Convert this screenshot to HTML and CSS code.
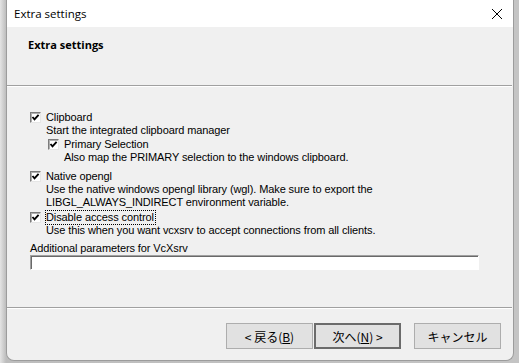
FILE: index.html
```html
<!DOCTYPE html>
<html lang="ja">
<head>
  <meta charset="UTF-8">
  <title>Extra settings</title>
  <link rel="stylesheet" href="styles.css">
</head>
<body>
  <div class="window">
    <div class="titlebar">
      <span class="title">Extra settings</span>
      <svg class="close" width="12" height="12" viewBox="0 0 12 12">
        <path d="M1 1 L11 11 M11 1 L1 11" stroke="#000" stroke-width="1"/>
      </svg>
    </div>

    <div class="header">
      <h2>Extra settings</h2>
    </div>

    <div class="content">
      <!-- Clipboard -->
      <div class="opt">
        <span class="check"><svg viewBox="0 0 9 9"><path d="M1.5 4 L3.5 6.3 L7.6 1.8" /></svg></span>
        <span>Clipboard</span>
      </div>
      <div class="desc">Start the integrated clipboard manager</div>
      <div class="sub">
        <div class="opt">
          <span class="check"><svg viewBox="0 0 9 9"><path d="M1.5 4 L3.5 6.3 L7.6 1.8" /></svg></span>
          <span>Primary Selection</span>
        </div>
        <div class="desc">Also map the PRIMARY selection to the windows clipboard.</div>
      </div>

      <!-- OpenGL -->
      <div class="opt opt-gap">
        <span class="check"><svg viewBox="0 0 9 9"><path d="M1.5 4 L3.5 6.3 L7.6 1.8" /></svg></span>
        <span>Native opengl</span>
      </div>
      <div class="desc">Use the native windows opengl library (wgl). Make sure to export the<br>LIBGL_ALWAYS_INDIRECT environment variable.</div>

      <!-- Access control -->
      <div class="opt opt-gap2">
        <span class="check"><svg viewBox="0 0 9 9"><path d="M1.5 4 L3.5 6.3 L7.6 1.8" /></svg></span>
        <span class="focus">Disable access control</span>
      </div>
      <div class="desc">Use this when you want vcxsrv to accept connections from all clients.</div>

      <div class="label">Additional parameters for VcXsrv</div>
      <input class="params" type="text">
    </div>

    <div class="footer">
      <button class="btn">&lt; 戻る(<u>B</u>)</button>
      <button class="btn default">次へ(<u>N</u>) &gt;</button>
      <button class="btn cancel">キャンセル</button>
    </div>
  </div>
</body>
</html>
```

FILE: styles.css
```css
body {
  margin: 0;
  background: linear-gradient(to right, #e4e4e4, #bdbdbd 6px, #c4c4c4);
  height: 363px;
  overflow: hidden;
}

.window {
  margin-left: 6px;
  width: 508px;
  height: 361px;
  background: #f0f0f0;
  border-left: 1px solid #9c9c9c;
  border-right: 1px solid #9c9c9c;
  border-bottom: 1px solid #9c9c9c;
  border-radius: 0 0 8px 8px;
  box-sizing: border-box;
  display: flex;
  flex-direction: column;
  color: #000;
}

.titlebar {
  height: 27px;
  background: #fff;
  display: flex;
  align-items: center;
  justify-content: space-between;
  padding: 0 10px 0 7px;
  font-family: "Open Sans", "Noto Sans", sans-serif;
  font-size: 11.5px;
}

.close {
  margin-top: 1px;
}

.header {
  height: 59px;
  padding: 0 0 0 21px;
  border-bottom: 1px solid #a0a0a0;
  box-shadow: 0 1px 0 #fff;
  margin-right: 1px;
  box-sizing: border-box;
}

.header h2 {
  margin: 0;
  padding-top: 10px;
  font-family: "Open Sans", "Noto Sans", sans-serif;
  font-size: 11px;
  font-weight: 700;
}

.content {
  padding: 25px 0 0 23px;
  font-family: "Liberation Sans", "Noto Sans CJK JP", sans-serif;
  font-size: 11px;
  letter-spacing: -0.1px;
  line-height: 13px;
}

.opt {
  display: flex;
  align-items: center;
  height: 13px;
}

.opt-gap {
  margin-top: 6px;
}

.opt-gap2 {
  margin-top: 2px;
}

.check {
  width: 9px;
  height: 9px;
  background: #fff;
  border: 1px solid;
  border-color: #7c7c7c #e6e6e6 #e6e6e6 #7c7c7c;
  box-shadow: inset 1px 1px 0 #b0b0b0;
  margin-right: 5px;
  display: flex;
}

.check svg {
  width: 9px;
  height: 9px;
}

.check path {
  fill: none;
  stroke: #000;
  stroke-width: 1.9;
}

.desc {
  padding-left: 16px;
}

.sub {
  margin-top: 1px;
  padding-left: 18px;
}

.focus {
  outline: 1px dotted #000;
  outline-offset: 0;
  padding-right: 1px;
}

.label {
  margin-top: 5px;
}

.params {
  display: block;
  margin: 0;
  width: 449px;
  height: 15px;
  box-sizing: border-box;
  background: #fff;
  border: 1px solid;
  border-color: #a0a0a0 #fff #fff #a0a0a0;
  box-shadow: inset 1px 1px 0 #696969;
  padding: 0;
}

.footer {
  margin-top: auto;
  height: 53px;
  border-top: 1px solid #a0a0a0;
  box-shadow: inset 0 1px 0 #fff;
  margin-right: 1px;
  display: flex;
  justify-content: flex-end;
  align-items: flex-start;
  padding: 15px 11px 0 0;
  box-sizing: border-box;
  border-radius: 0 0 8px 8px;
}

.btn {
  width: 87px;
  height: 26px;
  background: #e1e1e1;
  border: 1px solid #adadad;
  font-family: "Noto Sans CJK JP", sans-serif;
  font-size: 12px;
  color: #000;
  padding: 0;
  margin: 0;
}

.default {
  border: 2px solid #6b6b6b;
  margin-left: 1px;
}

.cancel {
  margin-left: 13px;
}
```
